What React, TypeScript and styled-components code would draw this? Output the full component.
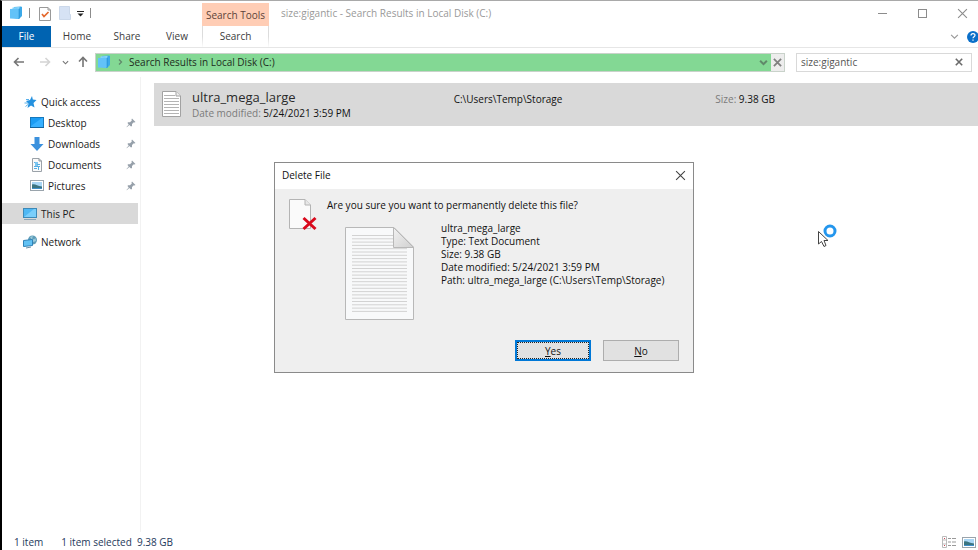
import React from "react";
import styled, { createGlobalStyle, css } from "styled-components";

const GlobalStyle = createGlobalStyle`
  * { box-sizing: border-box; }
  body { margin: 0; background: #fff; overflow: hidden; }
  body, button, input { font-family: "Open Sans", "Noto Sans", sans-serif; font-size: 10px; }
  button { border: 0; padding: 0; background: none; color: inherit; }
  svg { display: block; flex: none; }
`;

const Window = styled.div`
  position: relative;
  display: flex;
  flex-direction: column;
  height: 100vh;
  background: #fff;
  color: #1b1b1b;
  border-left: 2px solid #000;
  border-top: 1px solid #a9a9a9;
  line-height: 14px;
`;

const TitleBar = styled.header`
  display: flex;
  align-items: stretch;
  height: 25px;
`;

const QuickTools = styled.div`
  display: flex;
  align-items: center;
  width: 200px;
  padding: 0 0 1px 7px;
`;

const ToolButton = styled.button<{ $gap: number }>`
  margin-right: ${(p) => p.$gap}px;
`;

const Separator = styled.span<{ $gap?: number }>`
  width: 1px;
  height: 10px;
  margin-right: ${(p) => p.$gap ?? 0}px;
  background: #8c8c8c;
`;

const ContextLabel = styled.div`
  width: 67px;
  margin-top: 2px;
  padding-top: 5px;
  text-align: center;
  white-space: nowrap;
  background: #ffcdb5;
  color: #5d4238;
`;

const WindowTitle = styled.h1`
  flex: 1;
  margin: 0;
  padding: 5px 0 0 12px;
  font-size: 10px;
  font-weight: 400;
  color: #999;
`;

const WindowControls = styled.div`
  display: flex;
  align-items: flex-start;
  margin-right: -4px;
`;

const ControlButton = styled.button`
  display: grid;
  place-items: center;
  width: 40px;
  height: 24px;
  color: #8c8c8c;
`;

const Ribbon = styled.nav`
  display: flex;
  height: 22px;
  border-bottom: 1px solid #e6e6e6;
`;

const RibbonTab = styled.button<{ $kind?: "file" | "context" }>`
  width: 50px;
  padding-bottom: 1px;
  color: #3c3c3c;
  ${(p) =>
    p.$kind === "file" &&
    css`
      width: 49px;
      margin-right: 1px;
      background: #0063b1;
      color: #fff;
    `}
  ${(p) =>
    p.$kind === "context" &&
    css`
      width: 67px;
      border: solid;
      border-width: 0 1px;
      border-image: linear-gradient(#dcdcdc 50%, #fff) 1;
    `}
`;

const RibbonTools = styled.div`
  display: flex;
  align-items: center;
  gap: 8px;
  margin-right: -1px;
  margin-left: auto;
  color: #999;
`;

const AddressRow = styled.div`
  display: flex;
  align-items: center;
  height: 29px;
  padding: 0 6px 1px 0;
`;

const HistoryButtons = styled.div`
  display: flex;
  align-items: center;
  width: 93px;
  padding-left: 11px;
  color: #757575;
`;

const AddressBar = styled.div`
  display: flex;
  flex: 1;
  align-items: center;
  height: 19px;
  padding-left: 1px;
  border: 1px solid #c9d2ca;
  background: #83d894;
  color: #1d2b20;
`;

const Crumb = styled.button`
  margin-left: 5px;
`;

const PathChevron = styled(Crumb)`
  color: #60896a;
`;

const DropButton = styled.button`
  margin-left: auto;
  margin-right: 3px;
  color: #60896a;
`;

const StopButton = styled.button`
  display: grid;
  place-items: center;
  width: 13px;
  height: 17px;
  background: #ededed;
  color: #808080;
`;

const SearchBox = styled.label`
  display: flex;
  align-items: center;
  width: 176px;
  height: 19px;
  margin-left: 11px;
  padding: 0 8px 0 4px;
  border: 1px solid #d9d9d9;
  color: #6a6a6a;
`;

const SearchInput = styled.input`
  flex: 1;
  min-width: 0;
  border: 0;
  padding: 0;
  outline: 0;
  color: #555;
  background: transparent;
`;

const Content = styled.div`
  display: flex;
  flex: 1;
  min-height: 0;
`;

const Sidebar = styled.aside`
  width: 139px;
  padding-top: 14px;
  border-right: 1px solid #f2f2f2;
`;

const NavItem = styled.a<{ $child?: boolean; $selected?: boolean; $spaced?: boolean }>`
  display: flex;
  align-items: center;
  gap: 4px;
  height: 21px;
  margin: ${(p) => (p.$spaced ? 7 : 0)}px 2px 0 0;
  padding: 0 2px 0 ${(p) => (p.$child ? 28 : 21)}px;
  background: ${(p) => (p.$selected ? "#d9d9d9" : "transparent")};
  color: inherit;
  text-decoration: none;
`;

const PinSlot = styled.span`
  margin-left: auto;
`;

const Results = styled.main`
  flex: 1;
  padding: 6px 0 0 13px;
`;

const ResultRow = styled.article`
  display: grid;
  grid-template-columns: 38px minmax(0, 262fr) minmax(0, 262fr) minmax(0, 263fr);
  height: 43px;
  background: #d9d9d9;
  padding-top: 6px;
`;

const FileIcon = styled.div`
  padding: 2px 0 0 8px;
`;

const FileName = styled.h2`
  margin: 0;
  font-size: 13px;
  line-height: 16px;
  font-weight: 400;
  color: #2a2a2a;
`;

const Field = styled.p`
  margin: 0;
  padding-top: 3px;
  color: #111;
`;

const DateLine = styled.p`
  margin: 0;
  padding-top: 1px;
  color: #111;
`;

const Muted = styled.span`
  color: #7b7b7b;
`;

const StatusBar = styled.footer`
  display: flex;
  align-items: center;
  height: 18px;
  padding: 2px 2px 0 12px;
  color: #1e395b;
`;

const StatusText = styled.span`
  margin-right: 18px;
`;

const ViewButtons = styled.div`
  display: flex;
  gap: 6px;
  margin-left: auto;
`;

const Dialog = styled.section`
  position: absolute;
  top: 161px;
  left: calc(50% - 216px);
  width: 420px;
  border: 1px solid #8a8a8a;
  background: #efefef;
  color: #111;
`;

const DialogHeader = styled.header`
  display: flex;
  align-items: center;
  justify-content: space-between;
  height: 26px;
  padding: 0 7px 2px 7px;
  background: #fff;
`;

const DialogTitle = styled.h2`
  margin: 0;
  font-size: 10px;
  font-weight: 400;
`;

const CloseButton = styled.button`
  color: #444;
`;

const DialogBody = styled.div`
  display: flex;
  gap: 9px;
  padding: 9px 13px 0;
`;

const Question = styled.p`
  margin: 0;
`;

const Preview = styled.div`
  display: flex;
  gap: 26px;
  padding: 15px 0 0 18px;
`;

const FileDetails = styled.p`
  margin: -5px 0 0;
  line-height: 13px;
`;

const DialogActions = styled.footer`
  display: flex;
  justify-content: flex-end;
  gap: 12px;
  padding: 19px 14px 11px;
`;

const ActionButton = styled.button<{ $default?: boolean }>`
  width: 76px;
  height: 21px;
  background: #e1e1e1;
  border: ${(p) => (p.$default ? "2px solid #0078d7" : "1px solid #adadad")};
  outline: ${(p) => (p.$default ? "1px dotted #222" : "none")};
  outline-offset: -3px;
`;

const Pointer = styled.div`
  position: absolute;
  left: calc(50% + 326px);
  top: 222px;
`;

const FolderIcon = () => (
  <svg width="14" height="14" viewBox="0 0 14 14">
    <path d="M5 1 12 .5 13 1V10L10 13 5 12Z" fill="#3ba9e8" />
    <path d="M3.500 1.500 10 1 11 2V12H3.500Z" fill="#8bd6fb" />
    <path d="M1 3 8 2.500 9.500 3V13L1 12.500Z" fill="#62c2f8" />
    <path d="M9.500 3 11 2V12L9.500 13Z" fill="#2c9be0" />
  </svg>
);

const Arrow = ({ direction, color = "currentColor" }: { direction: "left" | "right" | "up"; color?: string }) => {
  const paths = {
    left: "M11 6H1.500M5.500 2 1.500 6 5.500 10",
    right: "M1 6H10.500M6.500 2 10.500 6 6.500 10",
    up: "M6 11V1.500M2 5.500 6 1.500 10 5.500",
  };
  return (
    <svg width="12" height="12" viewBox="0 0 12 12" fill="none" stroke={color} strokeWidth="1.6">
      <path d={paths[direction]} />
    </svg>
  );
};

const Chevron = ({ width = 8, right = false, stroke = 1.3 }: { width?: number; right?: boolean; stroke?: number }) => (
  <svg width={width} height={width} viewBox="0 0 8 8" fill="none" stroke="currentColor" strokeWidth={stroke}>
    <path d={right ? "M3 1.500 5.500 4 3 6.500" : "M1 2.500 4 5.500 7 2.500"} />
  </svg>
);

const Cross = ({ size, stroke = 1 }: { size: number; stroke?: number }) => (
  <svg width={size} height={size} viewBox="0 0 10 10" fill="none" stroke="currentColor" strokeWidth={stroke}>
    <path d="M1 1 9 9M9 1 1 9" />
  </svg>
);

const Pin = () => (
  <svg width="10" height="10" viewBox="0 0 10 10">
    <path d="M6 .5 9.500 4 8.500 4.500 7.800 4.300 6 6 6 8 5 8.500 3.300 7 .8 9.300.5 9 2.700 6.500 1.500 5 2 4.300H4L5.800 2.500 5.500 1.500Z" fill="#96a0aa" />
  </svg>
);

const StarIcon = () => (
  <svg width="14" height="14" viewBox="0 0 14 14">
    <path d="M9 1 9.800 4.500 13.500 5 10.500 8 11.500 12.500 8 10.500 4.500 13 5.500 8.800 3 6 7 5Z" fill="#2491df" />
    <path d="M3 4.500H6M1.500 8H5M2.500 11.500 5 9.500" stroke="#57b0ec" />
  </svg>
);

const DesktopIcon = () => (
  <svg width="14" height="12" viewBox="0 0 14 12">
    <rect x=".5" y=".5" width="13" height="10" fill="#1c9cf3" stroke="#1679bd" />
    <path d="M1 9 12 1H13V10H1Z" fill="#37b0ff" />
    <path d="M0 10.500H14" stroke="#12639e" />
  </svg>
);

const DownloadIcon = () => (
  <svg width="14" height="14" viewBox="0 0 14 14">
    <path d="M4.500 0H9.500V7H13.500L7 14 .5 7H4.500Z" fill="#3b91dd" />
  </svg>
);

const DocumentIcon = () => (
  <svg width="14" height="14" viewBox="0 0 14 14">
    <path d="M2.500.5H9L11.500 3V13.500H2.500Z" fill="#fafafa" stroke="#9ba2a9" />
    <path d="M9 .5V3H11.500" fill="none" stroke="#8b9299" />
    <rect x="5" y="4" width="3" height="4" fill="#7cc6f1" />
    <path d="M4 4.500H5M7 6.500H10M4 8.500H10M4 10.500H7M8.500 8V12" stroke="#55aee3" />
  </svg>
);

const PictureIcon = () => (
  <svg width="14" height="11" viewBox="0 0 14 11">
    <rect x=".5" y=".5" width="13" height="10" fill="#fff" stroke="#9aa4ac" />
    <rect x="2" y="2" width="10" height="7" fill="#a9d6f5" />
    <path d="M2 4.500C5 3.500 7 6 12 6.500V9H2Z" fill="#3b7480" />
    <path d="M2 8H12V9H2Z" fill="#3f8fca" />
  </svg>
);

const PcIcon = () => (
  <svg width="14" height="14" viewBox="0 0 14 14">
    <rect x=".5" y="1.500" width="13" height="9" fill="#4fb8f4" stroke="#3d89b7" />
    <path d="M1 10 11 2H13V10Z" fill="#7acefb" />
    <path d="M1 12.500H13" stroke="#8ba5b7" />
  </svg>
);

const NetworkIcon = () => (
  <svg width="14" height="14" viewBox="0 0 14 14">
    <circle cx="9.500" cy="5" r="4.500" fill="#5f9db8" />
    <path d="M7 2 10 1 9 3.500 11 4.500 12.500 3 13 6 10.500 7Z" fill="#9ccbdc" />
    <path d="M.5 5.500 9.500 4.500V10.500L.5 11.500Z" fill="#62c2f4" stroke="#2f82b8" />
    <path d="M3 13 8 12" stroke="#6b8ea4" />
  </svg>
);

const TextFileIcon = () => (
  <svg width="19" height="26" viewBox="0 0 19 26">
    <path d="M.5.5H14L18.500 5V25.500H.5Z" fill="#fff" stroke="#a2a2a2" />
    <path d="M14 .5V5H18.500" fill="#eee" stroke="#a2a2a2" />
    <path d="M2 4.500H13M2 7.500H17M2 10.500H17M2 13.500H17M2 16.500H17M2 19.500H17M2 22.500H17" stroke="#b4b4b4" />
  </svg>
);

const DeleteFileIcon = () => (
  <svg width="30" height="34" viewBox="0 0 30 34">
    <path d="M1.500 1.500H17L22.500 7V30.500H1.500Z" fill="#fafafa" stroke="#b4b4b4" />
    <path d="M17 1.500V7H22.500" fill="#e7e7e7" stroke="#b4b4b4" />
    <path d="M15.500 20 27.500 31M27.500 20 15.500 31" stroke="#d9091c" strokeWidth="3" />
  </svg>
);

const LargeFileIcon = () => (
  <svg width="70" height="94" viewBox="0 0 70 94">
    <defs>
      <linearGradient id="fold" x2="1" y2="1">
        <stop stopColor="#f2f2f2" />
        <stop offset="1" stopColor="#d0d0d0" />
      </linearGradient>
    </defs>
    <path d="M.5.5H49L68.500 20V92.500H.5Z" fill="#f8f9fa" stroke="#b8b8b8" />
    {Array.from({ length: 24 }, (_, i) => (
      <path key={i} d={`M7 ${8.5 + i * 3.3}H${i < 4 ? 48 : 62}`} stroke="#d2d2d2" />
    ))}
    <path d="M48.500.5 68.500 20.500H48.500Z" fill="url(#fold)" stroke="#b8b8b8" />
  </svg>
);

const pinned = [
  { label: "Desktop", Icon: DesktopIcon },
  { label: "Downloads", Icon: DownloadIcon },
  { label: "Documents", Icon: DocumentIcon },
  { label: "Pictures", Icon: PictureIcon },
];

export default function App() {
  return (
    <>
      <GlobalStyle />
      <Window>
        <TitleBar>
          <QuickTools>
            <ToolButton $gap={6} aria-label="Window menu"><FolderIcon /></ToolButton>
            <Separator $gap={9} />
            <ToolButton $gap={8} aria-label="Properties">
              <svg width="12" height="15" viewBox="0 0 12 15">
                <path d="M.5 1.500H9L11.500 4V14.500H.5Z" fill="#fff" stroke="#999" />
                <path d="M9 1.500V4H11.500" fill="none" stroke="#999" />
                <path d="M3 8 5 10.500 9.500 6" fill="none" stroke="#e4682c" strokeWidth="1.7" />
              </svg>
            </ToolButton>
            <ToolButton $gap={6} aria-label="New folder">
              <svg width="12" height="14" viewBox="0 0 12 14">
                <path d="M.5.5H10.500V8.500H11.500V13.500H.5Z" fill="#d6e2f4" stroke="#cbd8ea" />
              </svg>
            </ToolButton>
            <ToolButton $gap={6} aria-label="Customize toolbar">
              <svg width="7" height="7" viewBox="0 0 7 7">
                <path d="M0 1.500H7" stroke="#222" />
                <path d="M.5 3.500H6.500L3.500 6.500Z" fill="#222" />
              </svg>
            </ToolButton>
            <Separator />
          </QuickTools>
          <ContextLabel>Search Tools</ContextLabel>
          <WindowTitle>size:gigantic - Search Results in Local Disk (C:)</WindowTitle>
          <WindowControls>
            <ControlButton aria-label="Minimize">
              <svg width="9" height="9" viewBox="0 0 9 9"><path d="M0 4.500H9" stroke="currentColor" /></svg>
            </ControlButton>
            <ControlButton aria-label="Maximize">
              <svg width="9" height="9" viewBox="0 0 9 9"><rect x=".5" y=".5" width="8" height="8" fill="none" stroke="currentColor" /></svg>
            </ControlButton>
            <ControlButton aria-label="Close"><Cross size={11} /></ControlButton>
          </WindowControls>
        </TitleBar>
        <Ribbon>
          <RibbonTab $kind="file">File</RibbonTab>
          <RibbonTab>Home</RibbonTab>
          <RibbonTab>Share</RibbonTab>
          <RibbonTab>View</RibbonTab>
          <RibbonTab $kind="context">Search</RibbonTab>
          <RibbonTools>
            <button aria-label="Expand ribbon"><Chevron width={9} stroke={1} /></button>
            <button aria-label="Help">
              <svg width="12" height="12" viewBox="0 0 12 12">
                <circle cx="6" cy="6" r="6" fill="#0a6fc9" />
                <path d="M4 4.500C4 2 8 2 8 4.300 8 5.800 6 5.800 6 7.300M6 8.500V9.700" fill="none" stroke="#fff" strokeWidth="1.200" />
              </svg>
            </button>
          </RibbonTools>
        </Ribbon>
        <AddressRow>
          <HistoryButtons>
            <ToolButton $gap={14} aria-label="Back"><Arrow direction="left" /></ToolButton>
            <ToolButton $gap={11} aria-label="Forward"><Arrow direction="right" color="#d4d4d4" /></ToolButton>
            <ToolButton $gap={8} aria-label="Recent locations"><Chevron width={7} /></ToolButton>
            <ToolButton $gap={0} aria-label="Up"><Arrow direction="up" /></ToolButton>
          </HistoryButtons>
          <AddressBar>
            <FolderIcon />
            <PathChevron aria-label="Path menu"><Chevron right width={8} /></PathChevron>
            <Crumb>Search Results in Local Disk (C:)</Crumb>
            <DropButton aria-label="Previous locations"><Chevron width={9} stroke={1.8} /></DropButton>
            <StopButton aria-label="Stop loading"><Cross size={9} stroke={2} /></StopButton>
          </AddressBar>
          <SearchBox>
            <SearchInput aria-label="Search" defaultValue="size:gigantic" />
            <button aria-label="Clear search"><Cross size={8} stroke={2} /></button>
          </SearchBox>
        </AddressRow>
        <Content>
          <Sidebar>
            <NavItem href="#"><StarIcon />Quick access</NavItem>
            {pinned.map(({ label, Icon }) => (
              <NavItem href="#" $child key={label}>
                <Icon />
                {label}
                <PinSlot><Pin /></PinSlot>
              </NavItem>
            ))}
            <NavItem href="#" $selected $spaced><PcIcon />This PC</NavItem>
            <NavItem href="#" $spaced><NetworkIcon />Network</NavItem>
          </Sidebar>
          <Results>
            <ResultRow>
              <FileIcon><TextFileIcon /></FileIcon>
              <div>
                <FileName>ultra_mega_large</FileName>
                <DateLine><Muted>Date modified:</Muted> 5/24/2021 3:59 PM</DateLine>
              </div>
              <Field>C:\Users\Temp\Storage</Field>
              <Field><Muted>Size:</Muted> 9.38 GB</Field>
            </ResultRow>
          </Results>
        </Content>
        <StatusBar>
          <StatusText>1 item</StatusText>
          <span>1 item selected&nbsp; 9.38 GB</span>
          <ViewButtons>
            <button aria-label="Details view">
              <svg width="14" height="12" viewBox="0 0 14 12" fill="none">
                <path d="M.5.500H4.500V11.500H.5ZM.5 4H4.500M.5 8H4.500" stroke="#bbb" />
                <path d="M6 2.500H9M10 2.500H14M6 6H9M10 6H14M6 9.500H9M10 9.500H14" stroke="#999" />
                <path d="M2 2.500H3M2 9.500H3" stroke="#c45" />
              </svg>
            </button>
            <button aria-label="Large icons view"><PictureIcon /></button>
          </ViewButtons>
        </StatusBar>
        <Dialog role="dialog" aria-labelledby="dialog-title">
          <DialogHeader>
            <DialogTitle id="dialog-title">Delete File</DialogTitle>
            <CloseButton aria-label="Close dialog"><Cross size={11} /></CloseButton>
          </DialogHeader>
          <DialogBody>
            <DeleteFileIcon />
            <div>
              <Question>Are you sure you want to permanently delete this file?</Question>
              <Preview>
                <LargeFileIcon />
                <FileDetails>
                  ultra_mega_large<br />
                  Type: Text Document<br />
                  Size: 9.38 GB<br />
                  Date modified: 5/24/2021 3:59 PM<br />
                  Path: ultra_mega_large (C:\Users\Temp\Storage)
                </FileDetails>
              </Preview>
            </div>
          </DialogBody>
          <DialogActions>
            <ActionButton $default><u>Y</u>es</ActionButton>
            <ActionButton><u>N</u>o</ActionButton>
          </DialogActions>
        </Dialog>
        <Pointer>
          <svg width="22" height="26" viewBox="0 0 22 26">
            <circle cx="14" cy="8" r="5" fill="none" stroke="#2496ed" strokeWidth="3" />
            <path d="M2.500 8.500V21L5.500 18.500 8 23.500 10 22.500 8 17.500H12Z" fill="#fff" stroke="#444" />
          </svg>
        </Pointer>
      </Window>
    </>
  );
}
